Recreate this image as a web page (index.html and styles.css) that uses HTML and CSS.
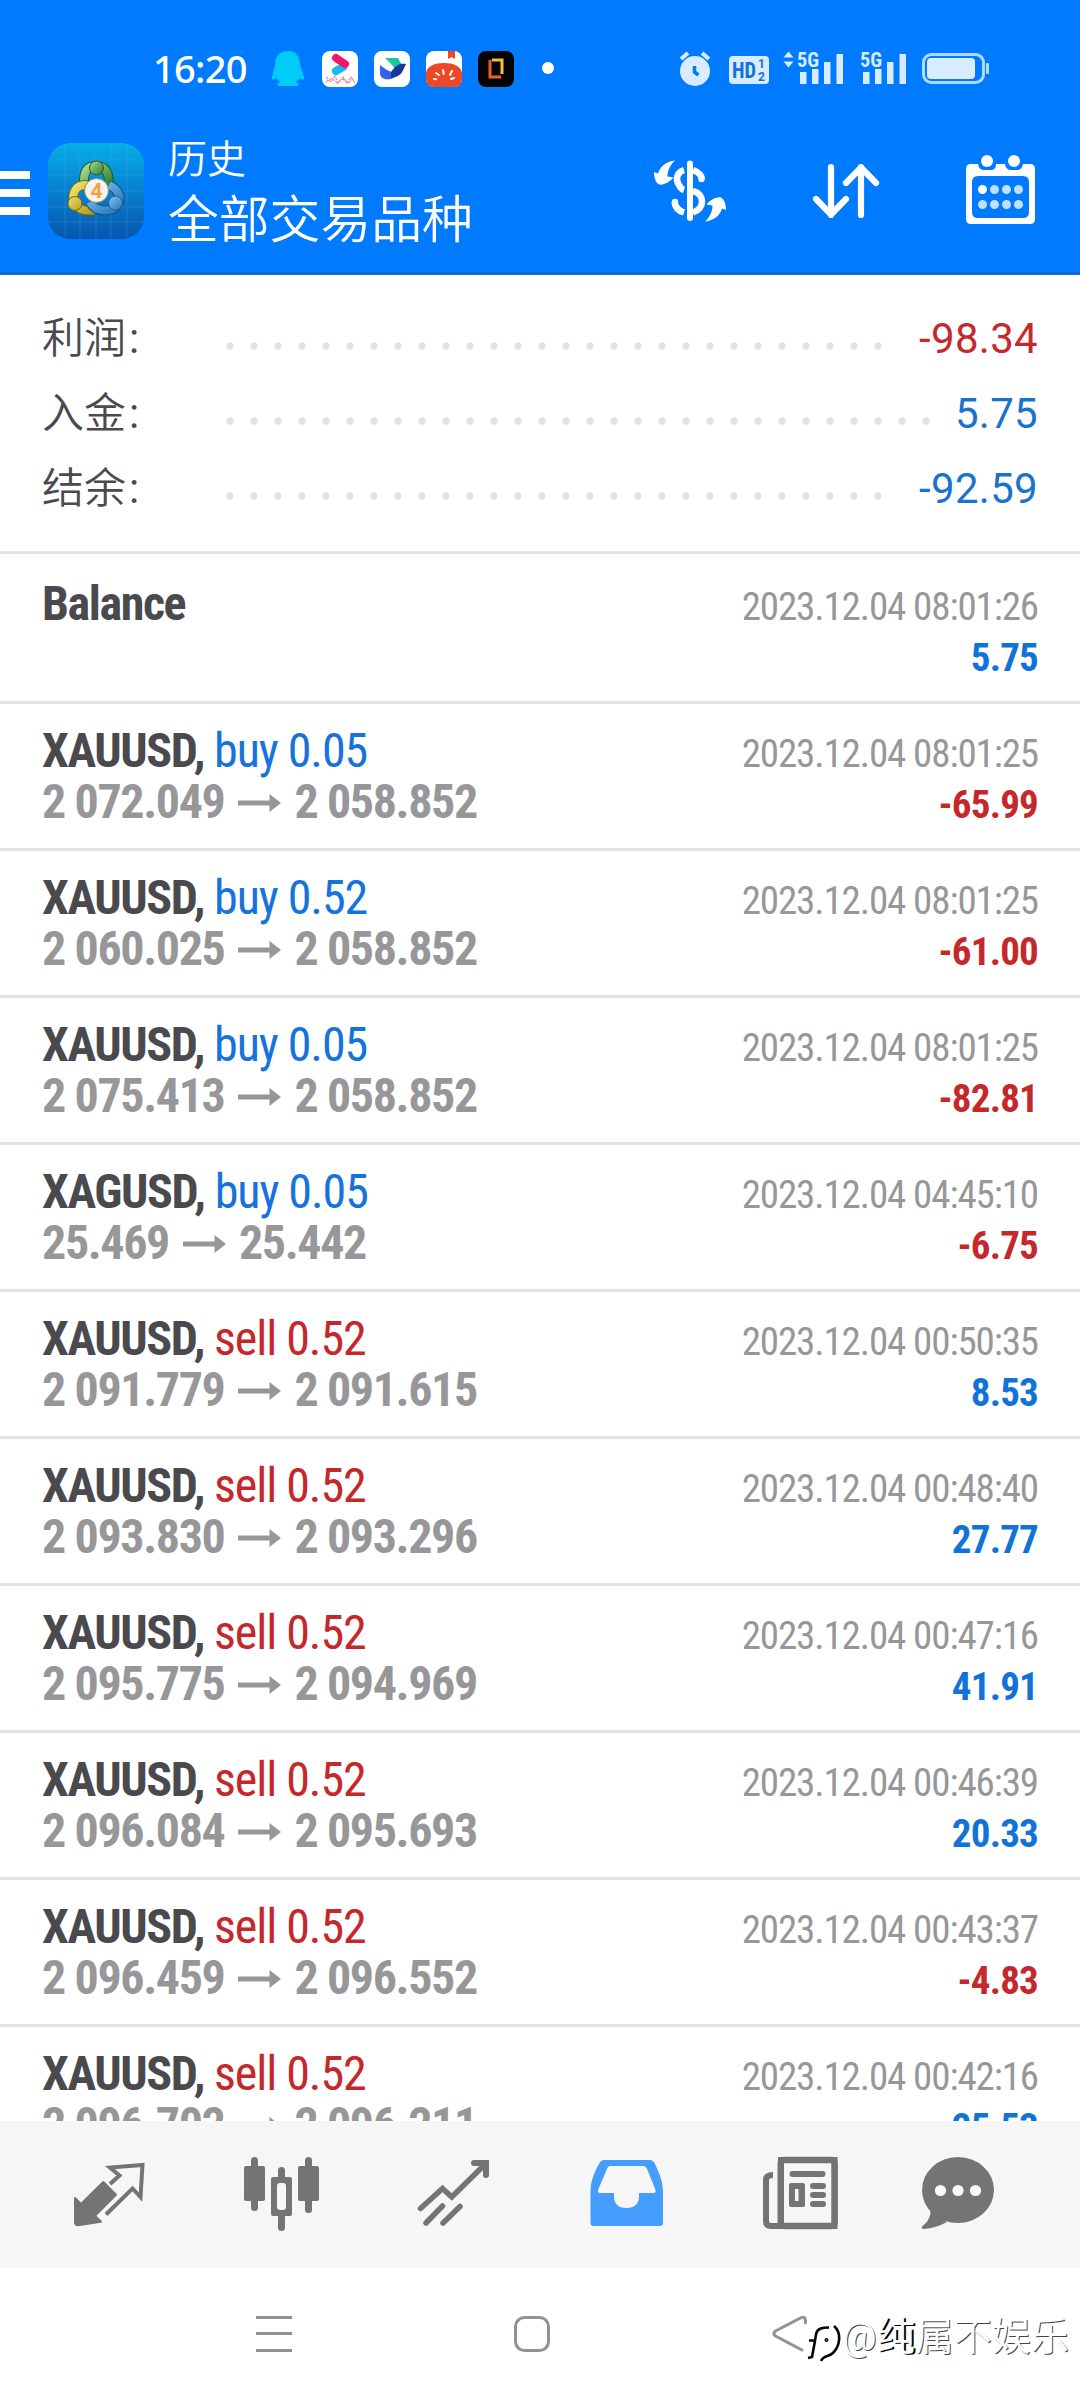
FILE: index.html
```html
<!DOCTYPE html>
<html lang="zh-CN">
<head>
<meta charset="utf-8">
<title>历史 - 全部交易品种</title>
<link rel="stylesheet" href="styles.css">
</head>
<body>
<div class="screen">
  <header class="header">
    <div class="status">
      <time class="clock">16:20</time>
      <svg class="status-apps" width="300" height="50" viewBox="262 45 300 50">
        <path fill="#00ccfb" d="M288 51c-8 0-13 5-13 14l-3 12c0 3 1 4 4 1l4 4c-3 1-3 4-2 4h20c1 0 1-3-2-4l4-4c3 3 4 2 4-1l-4-12c0-9-4-14-12-14z"/>
        <rect x="322" y="51" width="36" height="36" rx="8" fill="#fff"/>
        <path d="M336 71l7-4" stroke="#16b8ee" stroke-width="8" stroke-linecap="round"/>
        <path d="M336 58l9 6" stroke="#ee176a" stroke-width="8" stroke-linecap="round"/>
        <path d="M326 77l5 5 4-6 3 7 5-6 4 6 4-6 4 6M326 82l6-4 5 5 6-4 5 4 6-5" stroke="#ee8a92" stroke-width="1.2" fill="none" stroke-dasharray="3 1"/>
        <rect x="374" y="51" width="36" height="36" rx="8" fill="#fff"/>
        <path fill="#1ac6a4" d="M385 58h13l4 7-6 6c-2-5-7-9-11-13z"/>
        <path fill="#3264e8" d="M380 65c7 6 13 8 18 8-3 8-18 9-18 0z"/>
        <path fill="#173996" d="M391 72c5-7 9-9 15-8-3 6-4 13-15 14z"/>
        <rect x="426" y="51" width="36" height="36" rx="8" fill="#fff"/>
        <path fill="#ec4828" d="M448 51h7v8l-3.500-2-3.500 2zM426 73c1-7 9-10 18-10s17 3 18 10v6q0 8-8 8h-20q-8 0-8-8z"/>
        <path fill="none" stroke="#fff" stroke-width="2" stroke-linecap="round" d="M434 79l2 .3M436 73l3 2M443 70l.7 4M452 71l-2 4M454 78l-3 1"/>
        <rect x="478" y="51" width="36" height="36" rx="8" fill="#050404"/>
        <path fill="none" stroke="#e96225" stroke-width="3" d="M490 60v17h11"/>
        <path fill="none" stroke="#f5bf36" stroke-width="3" d="M492 60h10v14"/>
        <circle cx="548" cy="68" r="6" fill="#fff"/>
      </svg>
      <svg class="status-signals" width="314" height="50" viewBox="676 45 314 50" fill="#d9ecff">
        <circle cx="695" cy="71" r="15"/>
        <path d="M681 59l7-6M702 53l7 6" stroke="#d9ecff" stroke-width="4"/>
        <path d="M694.500 66v6l4 3" fill="none" stroke="#0078fb" stroke-width="3.500"/>
        <rect x="729" y="56" width="40" height="28" rx="4"/>
        <g fill="#1173da" font-family="Roboto, sans-serif" font-weight="700">
          <text class="narrow" x="732" y="77.500" font-size="21.500" textLength="24" lengthAdjust="spacingAndGlyphs">HD</text>
          <text x="758" y="68" font-size="12">1</text>
          <text x="758" y="80.500" font-size="12">2</text>
        </g>
        <path d="M783.500 57.500l5-6 5 6zM783.500 61.500h10l-5 6z"/>
        <text class="narrow" x="797" y="67" font-size="21" textLength="22" lengthAdjust="spacingAndGlyphs">5G</text>
        <path d="M800 72h6.500v12h-6.500zM812 69h6.500v15h-6.500zM824 62h6.500v22h-6.500zM836.500 54h6.500v30h-6.500z"/>
        <text class="narrow" x="860" y="67" font-size="21" textLength="22" lengthAdjust="spacingAndGlyphs">5G</text>
        <path d="M863 72h6.500v12h-6.500zM875 69h6.500v15h-6.500zM887 62h6.500v22h-6.500zM899.500 54h6.500v30h-6.500z"/>
        <rect x="923.500" y="54.500" width="60" height="28" rx="8" fill="none" stroke="#a9dcff" stroke-width="3"/>
        <rect x="927" y="58" width="48" height="21" rx="4"/>
        <rect x="986" y="63" width="3" height="11" rx="1" fill="#a9dcff"/>
      </svg>
    </div>
    <div class="toolbar">
      <svg width="156" height="120" viewBox="0 131 156 120">
        <defs>
          <linearGradient id="tile" x1="0" y1="0" x2="0" y2="1"><stop offset="0" stop-color="#06aee6"/><stop offset=".5" stop-color="#087fce"/><stop offset="1" stop-color="#0656ae"/></linearGradient>
          <linearGradient id="green" x1="0" y1="0" x2="1" y2="1"><stop offset="0" stop-color="#b5dc8c"/><stop offset="1" stop-color="#247a33"/></linearGradient>
          <linearGradient id="gold" x1="0" y1="0" x2="1" y2="1"><stop offset="0" stop-color="#eee56b"/><stop offset="1" stop-color="#b69b18"/></linearGradient>
          <linearGradient id="blue" x1="0" y1="0" x2="1" y2="1"><stop offset="0" stop-color="#82c7f2"/><stop offset="1" stop-color="#2475bb"/></linearGradient>
        </defs>
        <path fill="#fff" d="M0 171h30v8H0zM0 189h30v8H0zM0 207h30v8H0z"/>
        <rect x="48" y="143" width="96" height="96" rx="22" fill="url(#tile)"/>
        <path d="M65 144v94M80 144v94M96 144v94M111 144v94M127 144v94M49 160h94M49 175h94M49 191h94M49 207h94M49 222h94" stroke="#5bc4ee" stroke-opacity=".22" fill="none"/>
        <path d="M84 186c-1-16 4-20 12-20s14 5 13 21" fill="none" stroke="#1b6030" stroke-width="10"/>
        <path d="M84 186c-1-16 4-20 12-20s14 5 13 21" fill="none" stroke="url(#green)" stroke-width="8"/>
        <path d="M87 185c-12-1-15 9-13 16s9 11 20 9" fill="none" stroke="#776713" stroke-width="10"/>
        <path d="M87 185c-12-1-15 9-13 16s9 11 20 9" fill="none" stroke="url(#gold)" stroke-width="8"/>
        <path d="M90 202c4 8 11 9 19 8s12-9 10-15-6-8-10-10" fill="none" stroke="#174f80" stroke-width="10"/>
        <path d="M90 202c4 8 11 9 19 8s12-9 10-15-6-8-10-10" fill="none" stroke="url(#blue)" stroke-width="8"/>
        <circle cx="96.500" cy="168" r="7" fill="url(#green)" stroke="#245d2d"/>
        <circle cx="75" cy="203.500" r="7" fill="url(#gold)" stroke="#75631b"/>
        <circle cx="115.500" cy="203" r="7" fill="url(#blue)" stroke="#225d8e"/>
        <circle cx="96.500" cy="190.500" r="12" fill="#f4f3ef" stroke="#8a8a72"/>
        <text x="96.500" y="198" text-anchor="middle" font-family="Roboto, sans-serif" font-size="21" font-weight="700" fill="#f3a044">4</text>
      </svg>
      <div class="titles">
        <h1 class="title">历史</h1>
        <p class="subtitle">全部交易品种</p>
      </div>
      <svg class="actions" width="400" height="80" viewBox="640 151 400 80" fill="#fff">
        <path id="swap" d="M675 160.500c-9 1-15 6-17 13l-4-1.500c0 6 2 11 5 12.500 5 1 11-3 14.500-7l-6-1c0-6 3-12 7.500-16z"/>
        <use href="#swap" transform="rotate(180 690 191)"/>
        <rect x="687" y="160.500" width="6" height="60.500" rx="3"/>
        <path d="M684 170c-7 2-9 9-5 15q2 4 5 5M693 170q8 3 9 9M693 191c12 3 12 18 0 21.500M674.500 202q1 8 9.500 10.500" fill="none" stroke="#fff" stroke-width="6.500"/>
        <circle cx="701.500" cy="179" r="3.200"/><circle cx="675" cy="202" r="3.200"/>
        <path d="M831 167v48M816 199l15 15.500 15-15.500M861 215v-48M846 183l15-15.500 15 15.500" fill="none" stroke="#fff" stroke-width="6.200" stroke-linecap="round" stroke-linejoin="round"/>
        <path fill-rule="evenodd" d="M971 164h7q1 6 6 6h7q5 0 5-6h9q1 6 6 6h6q5 0 6-6h7q5 0 5 5v50q0 5-5 5h-59q-5 0-5-5v-50q0-5 5-5zm7 12q-6 0-6 6v30q0 6 6 6h45q6 0 6-6v-30q0-6-6-6z"/>
        <circle cx="987" cy="161" r="6"/><circle cx="1014" cy="161" r="6"/>
        <circle cx="982.500" cy="189.500" r="4.500"/>
        <path d="M994.500 189.500h.01M1006.500 189.500h.01M1018.500 189.500h.01M982.500 204.500h.01M994.500 204.500h.01M1006.500 204.500h.01M1018.500 204.500h.01" stroke="#bfe0ff" stroke-width="9" stroke-linecap="round"/>
      </svg>
    </div>
  </header>

  <section class="summary">
    <div class="total"><span class="label">利润<i>:</i></span><span class="dots"></span><span class="amount loss">-98.34</span></div>
    <div class="total"><span class="label">入金<i>:</i></span><span class="dots"></span><span class="amount">5.75</span></div>
    <div class="total"><span class="label">结余<i>:</i></span><span class="dots"></span><span class="amount">-92.59</span></div>
  </section>

  <svg width="0" height="0" class="defs"><symbol id="arrow" viewBox="0 0 43 18"><path fill="#97979a" d="M0 6.500h31.500V0L43 9 31.500 18v-6.500H0z"/></symbol></svg>

  <main class="deals">
    <article class="deal balance"><div class="line"><b class="symbol">Balance</b><time>2023.12.04 08:01:26</time></div><div class="line end"><b class="profit">5.75</b></div></article>
    <article class="deal"><div class="line"><span><b class="symbol">XAUUSD,</b> <span class="buy">buy 0.05</span></span><time>2023.12.04 08:01:25</time></div><div class="line"><span class="prices">2 072.049<svg><use href="#arrow"/></svg>2 058.852</span><b class="profit loss">-65.99</b></div></article>
    <article class="deal"><div class="line"><span><b class="symbol">XAUUSD,</b> <span class="buy">buy 0.52</span></span><time>2023.12.04 08:01:25</time></div><div class="line"><span class="prices">2 060.025<svg><use href="#arrow"/></svg>2 058.852</span><b class="profit loss">-61.00</b></div></article>
    <article class="deal"><div class="line"><span><b class="symbol">XAUUSD,</b> <span class="buy">buy 0.05</span></span><time>2023.12.04 08:01:25</time></div><div class="line"><span class="prices">2 075.413<svg><use href="#arrow"/></svg>2 058.852</span><b class="profit loss">-82.81</b></div></article>
    <article class="deal"><div class="line"><span><b class="symbol">XAGUSD,</b> <span class="buy">buy 0.05</span></span><time>2023.12.04 04:45:10</time></div><div class="line"><span class="prices">25.469<svg><use href="#arrow"/></svg>25.442</span><b class="profit loss">-6.75</b></div></article>
    <article class="deal"><div class="line"><span><b class="symbol">XAUUSD,</b> <span class="sell">sell 0.52</span></span><time>2023.12.04 00:50:35</time></div><div class="line"><span class="prices">2 091.779<svg><use href="#arrow"/></svg>2 091.615</span><b class="profit">8.53</b></div></article>
    <article class="deal"><div class="line"><span><b class="symbol">XAUUSD,</b> <span class="sell">sell 0.52</span></span><time>2023.12.04 00:48:40</time></div><div class="line"><span class="prices">2 093.830<svg><use href="#arrow"/></svg>2 093.296</span><b class="profit">27.77</b></div></article>
    <article class="deal"><div class="line"><span><b class="symbol">XAUUSD,</b> <span class="sell">sell 0.52</span></span><time>2023.12.04 00:47:16</time></div><div class="line"><span class="prices">2 095.775<svg><use href="#arrow"/></svg>2 094.969</span><b class="profit">41.91</b></div></article>
    <article class="deal"><div class="line"><span><b class="symbol">XAUUSD,</b> <span class="sell">sell 0.52</span></span><time>2023.12.04 00:46:39</time></div><div class="line"><span class="prices">2 096.084<svg><use href="#arrow"/></svg>2 095.693</span><b class="profit">20.33</b></div></article>
    <article class="deal"><div class="line"><span><b class="symbol">XAUUSD,</b> <span class="sell">sell 0.52</span></span><time>2023.12.04 00:43:37</time></div><div class="line"><span class="prices">2 096.459<svg><use href="#arrow"/></svg>2 096.552</span><b class="profit loss">-4.83</b></div></article>
    <article class="deal"><div class="line"><span><b class="symbol">XAUUSD,</b> <span class="sell">sell 0.52</span></span><time>2023.12.04 00:42:16</time></div><div class="line"><span class="prices">2 096.702<svg><use href="#arrow"/></svg>2 096.211</span><b class="profit">25.53</b></div></article>
  </main>

  <nav class="tabs">
    <svg viewBox="24 2121 172 147"><path fill="#747474" stroke="#747474" stroke-width="2" stroke-linejoin="round" d="M75 2198l6 6 22.300-22L116 2194.700l-21 21 6 6-23 3.500q-3 0-3-3z"/><path fill="none" stroke="#747474" stroke-width="4" d="M110 2184l9.500-8.500-9.500-8 32.500-2.500-2 32-8-8.500-26.500 26"/></svg>
    <svg viewBox="196 2121 172 147" fill="#747474"><rect x="244" y="2166" width="21" height="35" rx="2"/><rect x="251" y="2157" width="7" height="54" rx="3.500"/><path fill-rule="evenodd" d="M273 2177h17q2 0 2 2v35q0 2-2 2h-17q-2 0-2-2v-35q0-2 2-2zm7 6q-3 0-3 3v21q0 3 3 3h3q3 0 3-3v-21q0-3-3-3z"/><path d="M278 2178v-7.500a3.500 3.500 0 0 1 7 0v7.500zM278 2215v12.500a3.500 3.500 0 0 0 7 0V2215z"/><rect x="298" y="2166" width="21" height="35" rx="2"/><rect x="305" y="2157" width="7" height="56" rx="3.500"/></svg>
    <svg viewBox="368 2121 172 147" fill="none" stroke="#747474" stroke-width="5.500" stroke-linecap="round"><path d="M420.500 2208.500l22-20 9.300 8.500 34-33.500"/><path stroke-width="6" d="M474 2163h12v12"/><path d="M426 2223l16.500-17M443 2223l17-16.500"/></svg>
    <svg viewBox="540 2121 172 147"><path fill="#459dfd" fill-rule="evenodd" d="M604 2160q-3 0-5 4c-5 9-8.500 17-8.500 28v31q0 3 3 3h66q3.500 0 3.500-3v-31c0-11-4-19-8-28q-2-4-5-4zm6 6q-2 0-3 3l-9 21q-.5 3 2 3h14v3q0 12 12.500 12t12.500-12v-3h15q2 0 1.500-3l-8-20q-1.500-4-4.500-4z"/></svg>
    <svg viewBox="712 2121 172 147" fill="#747474"><path fill="none" stroke="#747474" stroke-width="6" d="M773 2175q-7 0-7 5v41q0 5 5 5h63.500V2160H781v66"/><rect x="780.700" y="2160" width="54" height="66" rx="3" fill="none" stroke="#747474" stroke-width="6.300"/><rect x="789.500" y="2171" width="36" height="6" rx="3"/><path fill-rule="evenodd" d="M791 2183h12q2 0 2 2v20q0 2-2 2h-12q-2 0-2-2v-20q0-2 2-2zm4 6v12h3.500v-12z"/><rect x="810" y="2183" width="16" height="6" rx="3"/><rect x="810" y="2192" width="16" height="6" rx="3"/><rect x="810" y="2201" width="16" height="6" rx="3"/></svg>
    <svg viewBox="884 2121 172 147"><ellipse cx="958" cy="2190" rx="36" ry="33" fill="#747474"/><path fill="#747474" d="M928 2208q4 3 1.500 9t-7 9q-2 3 1.500 3 12-1 23-7z"/><g fill="#fafafa"><circle cx="940.500" cy="2190.500" r="5.600"/><circle cx="958" cy="2190.500" r="5.600"/><circle cx="975.500" cy="2190.500" r="5.600"/></g></svg>
  </nav>

  <footer class="system">
    <svg width="580" height="132" viewBox="240 2268 580 132" fill="none" stroke="#929292" stroke-width="3"><path d="M256 2317.500h36M256 2333.500h36M256 2350.500h36"/><rect x="515.500" y="2317.500" width="33" height="33" rx="9"/><path d="M805.500 2323q.5-8-5-5l-25 13q-3.500 2.500 0 5l26.500 14" stroke-linecap="round"/></svg>
    <div class="watermark">
      <svg width="34" height="42" viewBox="806 2322 34 42" fill="none" stroke="#050505" stroke-width="2.600"><path d="M828 2327.500c-7 0-12 1-13 7l-1 6h-6M814 2341l-3 16-4 1"/><path d="M833 2326c8 7 6 20-1 27-4 4-10 2-12 8"/><circle cx="825.500" cy="2340" r=".7"/></svg>
      <span class="handle">@<em>纯</em>属不娱乐</span>
    </div>
  </footer>
</div>
</body>
</html>
```
FILE: styles.css
```css
* { box-sizing: border-box; }
body { margin: 0; background: #fff; font-family: Roboto, "Noto Sans CJK SC", sans-serif; color: #4a4a4e; }
h1, p { margin: 0; font-weight: 350; }
i, em { font-style: normal; }
svg { display: block; flex: none; }

.screen { width: 1080px; height: 2400px; display: flex; flex-direction: column; overflow: hidden; }
.defs { position: absolute; }

.header { height: 275px; flex: none; background: #007aff; border-bottom: 3px solid #116bd0; color: #fff; }
.status { height: 131px; padding: 45px 90px 0 153px; display: flex; align-items: flex-start; }
.clock { width: 109px; font: 500 38px/46px "Noto Sans", sans-serif; letter-spacing: -.7px; }
.status-signals { margin-left: auto; }
.narrow { font-stretch: 75%; font-weight: 700; }

.toolbar { display: flex; align-items: flex-start; }
.titles { padding: 1px 0 0 12px; }
.title { font-size: 39px; line-height: 56px; }
.subtitle { font-size: 50.8px; line-height: 66px; }
.actions { margin: 20px 40px 0 auto; }

.summary { flex: none; height: 279px; padding: 26px 42px 0; border-bottom: 3px solid #e4e4e4; }
.total { height: 75px; display: flex; align-items: center; font-size: 42px; line-height: 75px; }
.label { width: 176px; font-weight: 350; }
.label i { margin-left: 3px; font-weight: 400; }
.dots { flex: 1; height: 8px; margin: 15px 24px 0 0; background: radial-gradient(circle at 12px 4px, #e2e2e3 3.2px, transparent 4.200px) 0 0 / 24px 8px repeat-x; }
.amount { color: #1a72cf; letter-spacing: .3px; }
.total .loss { color: #c5282d; }

.deals { flex: 1; min-height: 0; overflow: hidden; font-stretch: 75%; }
.deal { height: 147px; padding: 21px 42px 0; border-bottom: 3px solid #e2e2e3; font-size: 48px; line-height: 51px; letter-spacing: -1.05px; }
.balance { height: 150px; padding-top: 24px; }
.line { height: 51px; display: flex; justify-content: space-between; align-items: baseline; }
.end::before { content: "\200b"; }
.symbol { color: #4a4a4e; letter-spacing: -1.4px; }
.buy { color: #1673dc; }
.sell { color: #c5282a; }
.prices { font-weight: 700; color: #97979a; letter-spacing: -1.38px; }
.prices svg { display: inline-block; width: 43px; height: 18px; margin: 0 13px 0 14px; vertical-align: 6px; }
.deal time { font-size: 39px; color: #97979a; letter-spacing: -1.1px; }
.profit { font-size: 39px; color: #1173d8; letter-spacing: -.8px; }
.deal .loss { color: #c5282a; }

.tabs { flex: none; height: 147px; padding-left: 24px; display: grid; grid-template-columns: repeat(6, 172px); background: #f6f6f6; }
.tabs svg { width: 172px; height: 147px; }

.system { flex: none; height: 132px; padding-left: 240px; display: flex; }
.watermark { display: flex; margin: 49px 0 0 -13px; height: 50px; }
.watermark svg { margin-top: 5px; }
.handle { margin: -3px 0 0 1px; font-size: 38.5px; line-height: 46px; white-space: nowrap; color: #fff; text-shadow: 1px 1px 0 #444; }
.handle em { text-shadow: 2px 1px 0 #000; }
```
